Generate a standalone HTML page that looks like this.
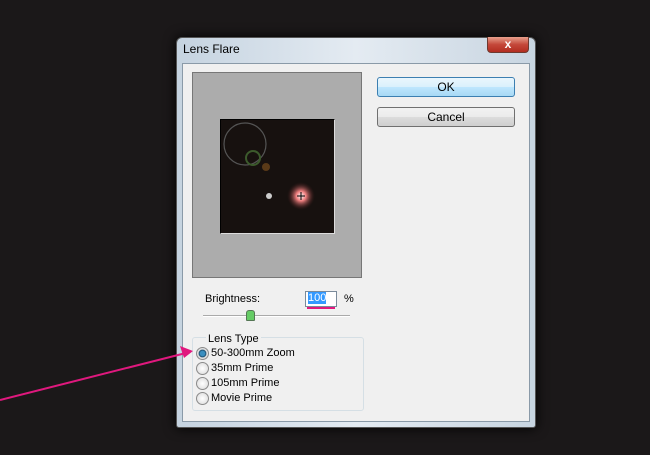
<!DOCTYPE html>
<html><head><style>
body{margin:0;width:650px;height:455px;background:#1b1819;position:relative;overflow:hidden;font-family:"Liberation Sans",sans-serif;font-size:11px;color:#000}
.a{position:absolute}
.btn{position:absolute;border:1px solid #707070;border-radius:3px;background:linear-gradient(#f2f2f2 0,#ebebeb 50%,#dcdcdc 51%,#cfcfcf);text-align:center;line-height:18px;font-size:12px}
.rad{position:absolute;width:11px;height:11px;border-radius:50%;border:1px solid #8a8a8a;background:radial-gradient(#fff,#d8d8d8)}
.t{position:absolute;font-size:11px}
</style></head><body>
<div class="a" style="left:176px;top:37px;width:358px;height:389px;border:1px solid #555;border-radius:6px 6px 3px 3px;background:linear-gradient(90deg,#c5d3e0,#e4ebf2 50%,#c8d5e1);box-shadow:0 0 12px #000"></div>
<div class="a" style="left:183px;top:42px;font-size:12px">Lens Flare</div>
<div class="a" style="left:487px;top:37px;width:40px;height:15px;border:1px solid #6d3a30;border-top:none;border-radius:0 0 4px 4px;background:linear-gradient(#e8a08c,#c4483a 50%,#b22d20);color:#fff;font-weight:bold;text-align:center;line-height:14px;font-size:12px">x</div>
<div class="a" style="left:182px;top:63px;width:346px;height:357px;background:#f0f0f0;border:1px solid #8a9aa8"></div>
<div class="a" style="left:192px;top:72px;width:170px;height:206px;background:#acacac;border:1px solid #777;box-sizing:border-box"></div>
<div class="a" style="left:220px;top:119px;width:115px;height:115px;background:#17110f;border:1px solid #000;border-right-color:#ddd;border-bottom-color:#ddd;box-sizing:border-box;overflow:hidden">
<svg width="115" height="115">
<circle cx="24" cy="24" r="21" fill="none" stroke="#555" stroke-width="1.2"/>
<circle cx="32" cy="38" r="7" fill="none" stroke="#3c5a2c" stroke-width="2"/>
<circle cx="45" cy="47" r="4" fill="#5a3a18"/>
<defs><radialGradient id="g"><stop offset="0" stop-color="#fff"/><stop offset=".35" stop-color="#f07f7f"/><stop offset="1" stop-color="#3a1616" stop-opacity="0"/></radialGradient></defs>
<circle cx="80" cy="76" r="14" fill="url(#g)"/>
<circle cx="48" cy="76" r="3" fill="#ccc"/>
<path d="M76 76h8M80 72v8" stroke="#000"/>
</svg></div>
<div class="btn" style="left:377px;top:77px;width:136px;height:18px;border-color:#3c7fb1;background:linear-gradient(#eaf6fd,#d9f0fc 50%,#bee6fd 51%,#a7d9f5)">OK</div>
<div class="btn" style="left:377px;top:107px;width:136px;height:18px">Cancel</div>
<div class="t" style="left:205px;top:293px">Brightness:</div>
<div class="a" style="left:305px;top:291px;width:30px;height:14px;background:#fff;border:1px solid #7a8a9a"><span style="background:#3399ff;color:#fff;font-size:11px;margin-left:2px">100</span></div>
<div class="a" style="left:307px;top:307px;width:28px;height:2px;background:#e0187e"></div>
<div class="t" style="left:344px;top:293px">%</div>
<div class="a" style="left:203px;top:315px;width:147px;height:1px;background:#aaa;border-bottom:1px solid #fff"></div>
<div class="a" style="left:246px;top:310px;width:7px;height:9px;background:#6c6;border:1px solid #575;border-radius:3px 3px 1px 1px"></div>
<div class="a" style="left:192px;top:337px;width:170px;height:72px;border:1px solid #d5dfe5;border-radius:3px"></div>
<div class="t" style="left:206px;top:333px;background:#f0f0f0;padding:0 2px">Lens Type</div>
<div class="rad" style="left:196px;top:347px;background:radial-gradient(#3a8fc0 30%,#1a4a6a 45%,#e0e0e0 55%)"></div>
<div class="t" style="left:211px;top:347px">50-300mm Zoom</div>
<div class="rad" style="left:196px;top:362px"></div>
<div class="t" style="left:211px;top:362px">35mm Prime</div>
<div class="rad" style="left:196px;top:377px"></div>
<div class="t" style="left:211px;top:377px">105mm Prime</div>
<div class="rad" style="left:196px;top:392px"></div>
<div class="t" style="left:211px;top:392px">Movie Prime</div>
<svg class="a" style="left:0;top:0" width="650" height="455"><path d="M0 400L186 353" stroke="#e0187e" stroke-width="2"/><path d="M193 351L180 346L184 358Z" fill="#e0187e"/></svg>
</body></html>
